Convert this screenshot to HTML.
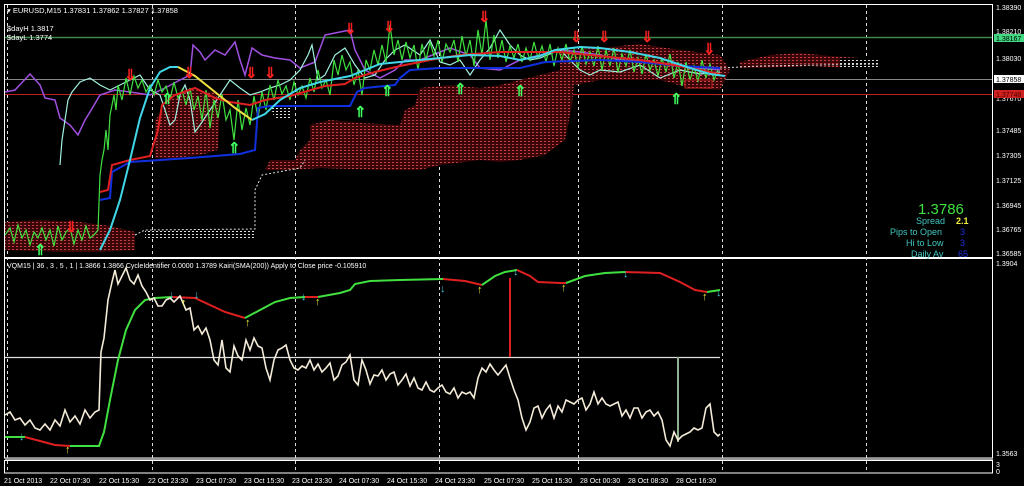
<!DOCTYPE html>
<html><head><meta charset="utf-8"><style>
html,body{margin:0;padding:0;background:#000;width:1024px;height:486px;overflow:hidden}
svg{display:block}
text{font-family:"Liberation Sans",sans-serif}
</style></head><body>
<svg width="1024" height="486" viewBox="0 0 1024 486" xmlns="http://www.w3.org/2000/svg">
<defs>
<pattern id="cl" width="4" height="3" patternUnits="userSpaceOnUse"><rect width="4" height="3" fill="#3a0608"/><rect x="0" y="0" width="2" height="1" fill="#c84048"/></pattern>
<pattern id="cw" width="4" height="3" patternUnits="userSpaceOnUse"><rect width="4" height="3" fill="#000"/><rect x="0" y="0" width="2" height="1" fill="#dddddd"/></pattern>
</defs>
<rect x="0" y="0" width="1024" height="486" fill="#000"/>
<rect x="4.5" y="4.5" width="988" height="253" fill="none" stroke="#fff"/>
<rect x="4.5" y="258.5" width="988" height="199.5" fill="none" stroke="#fff"/>
<rect x="4.5" y="460.5" width="988" height="12.5" fill="none" stroke="#fff"/>
<rect x="5" y="458" width="988" height="2" fill="#999"/>
<g stroke="#ddd" stroke-dasharray="3,3" stroke-width="1">
<line x1="7.5" y1="5" x2="7.5" y2="473"/><line x1="152.5" y1="5" x2="152.5" y2="473"/>
<line x1="295.5" y1="5" x2="295.5" y2="473"/><line x1="439.5" y1="5" x2="439.5" y2="473"/>
<line x1="578.5" y1="5" x2="578.5" y2="473"/><line x1="722.5" y1="5" x2="722.5" y2="473"/>
<line x1="866.5" y1="5" x2="866.5" y2="473"/>
</g>
<line x1="5" y1="37.5" x2="992" y2="37.5" stroke="#3c8a48" stroke-width="1.5"/>
<line x1="5" y1="79.5" x2="992" y2="79.5" stroke="#888"/>
<line x1="5" y1="94.5" x2="992" y2="94.5" stroke="#c02020"/>
<polygon fill="url(#cl)" points="5,222 40,220 80,222 110,226 135,232 135,250 100,252 60,252 5,250"/>
<polygon fill="url(#cl)" points="155,120 170,100 190,90 215,92 220,105 218,150 200,155 175,158 155,158"/>
<polygon fill="url(#cl)" points="265,170 270,160 295,160 300,150 310,140 310,125 330,120 360,123 400,125 405,110 415,105 420,88 450,85 480,88 500,85 520,80 560,70 575,72 572,105 565,140 545,155 520,160 500,162 480,160 440,165 420,170 380,170 320,168 290,170"/>
<polygon fill="url(#cl)" points="560,50 600,48 640,44 680,50 720,55 730,70 720,90 690,88 660,80 600,80 575,85 560,80"/>
<polygon fill="url(#cl)" points="740,62 770,55 800,53 830,56 860,58 880,60 880,68 850,68 810,66 760,68 740,68"/>
<polygon fill="url(#cw)" points="145,230 180,230 255,229 255,238 180,240 145,238"/>
<polygon fill="url(#cw)" points="270,105 290,105 290,120 275,120"/>
<polygon fill="url(#cw)" points="840,58 880,58 880,68 840,68"/>
<polyline fill="none" stroke="#ddd" stroke-dasharray="2,2" points="135,235 145,230 255,229 255,190 262,175 300,168 305,160"/>
<polyline fill="none" stroke="#ddd" stroke-dasharray="2,2" points="720,68 760,66 820,65 880,64"/>
<polyline fill="none" stroke="#a050e0" stroke-width="1.5" points="5,92 15,90 30,74 40,85 45,98 55,100 60,118 70,125 78,135 85,120 90,112 100,95 115,90 130,92 150,95 165,88 180,80 190,75 193,45 200,52 205,60 215,50 225,55 235,42 240,60 245,75 252,48 262,55 275,58 290,60 300,68 315,62 325,35 340,32 350,30 355,50 365,70 380,78 395,70 405,60 420,60 440,52 450,48 470,55 480,68 500,70 520,60 540,55 560,50 580,52 600,55 620,60 650,62 680,65 700,68 720,70"/>
<polyline fill="none" stroke="#a0f0e0" stroke-width="1.2" points="60,165 62,140 68,100 72,92 80,82 90,78 100,85 110,90 130,80 140,75 150,90 160,95 165,110 170,125 175,120 180,95 185,85 190,100 195,132 200,125 210,110 220,95 230,80 240,88 250,95 260,92 270,88 280,85 290,80 300,70 308,55 312,45 318,80 325,75 335,55 345,48 355,65 365,78 375,75 385,60 395,50 405,45 420,55 430,40 440,62 450,65 460,60 470,75 480,60 490,48 500,30 510,45 520,55 530,60 540,58 560,50 570,60 580,70 590,75 600,70 620,72 640,65 660,78 680,70 700,74 720,72"/>
<polyline fill="none" stroke="#40e040" stroke-width="1.2" points="5,235 10,228 14,242 18,225 22,238 26,230 30,245 34,232 38,238 42,228 46,240 50,230 54,246 58,226 62,240 66,232 70,228 74,244 78,230 82,240 86,226 90,238 94,235 98,230 100,175 102,160 104,150 106,130 108,150 110,115 112,105 114,95 116,110 118,85 122,100 126,78 130,95 134,76 138,88 142,80 146,92 150,85 154,95 158,80 162,92 166,86 170,100 174,82 178,98 182,90 186,105 190,88 194,110 198,96 202,120 206,90 210,128 214,100 218,118 222,94 226,120 230,110 234,140 238,100 242,130 246,108 250,125 254,96 258,118 262,92 266,110 270,85 274,100 278,80 282,94 286,86 290,100 294,82 298,95 302,86 306,98 310,78 314,92 318,70 322,88 326,80 330,95 334,60 338,75 342,55 346,70 350,62 354,85 358,70 362,95 366,60 370,70 374,50 378,65 382,45 386,62 390,25 394,55 398,40 402,60 406,42 410,58 414,45 418,70 422,44 426,60 430,42 434,56 438,40 442,62 446,44 450,52 454,40 458,62 462,36 466,56 470,40 474,66 478,30 482,55 486,20 490,60 494,35 498,58 502,40 506,62 510,46 514,58 518,44 522,62 526,48 530,60 534,42 538,58 542,46 546,62 550,44 554,66 558,48 562,60 566,44 570,62 574,50 578,68 582,46 586,64 590,52 594,66 598,46 602,70 606,50 610,66 614,48 618,72 622,54 626,66 630,50 634,72 638,58 642,74 646,54 650,70 654,60 658,76 662,58 666,72 670,54 674,78 678,62 682,86 686,62 690,80 694,66 698,82 702,60 706,78 710,64 714,80 718,70"/>
<polyline fill="none" stroke="#1030e0" stroke-width="2" points="100,200 110,198 112,172 130,162 190,158 240,154 255,150 258,108 270,106 350,106 357,92 365,88 395,85 400,78 410,70 440,68 520,68 545,62 600,60 640,62 680,66 720,68"/>
<polyline fill="none" stroke="#e02020" stroke-width="2" points="100,192 108,190 112,165 130,160 150,156 158,130 162,105 175,95 195,88 215,98 230,102 250,105 265,100 290,96 325,86 345,84 355,78 375,72 400,66 430,60 460,55 500,52 560,52 600,56 640,60 680,66 720,74"/>
<polyline fill="none" stroke="#40d8e8" stroke-width="2" points="100,250 110,230 120,200 130,160 140,118 150,88 160,72 170,67 178,67"/>
<polyline fill="none" stroke="#f0e040" stroke-width="2" points="178,67 195,76 215,92 235,108 252,120"/>
<polyline fill="none" stroke="#40d8e8" stroke-width="2" points="252,120 265,114 280,100 300,88 320,82 350,76 380,64 420,60 470,55 500,56 520,60 540,56 555,50 580,47 600,48 630,52 660,58 690,68 710,74 725,76"/>
<g fill="#ff2020" font-size="15" font-weight="bold">
<text x="124" y="80">⇓</text><text x="183" y="78">⇓</text><text x="245" y="78">⇓</text><text x="264" y="78">⇓</text><text x="344" y="34">⇓</text><text x="383" y="32">⇓</text><text x="478" y="22">⇓</text><text x="570" y="42">⇓</text><text x="598" y="42">⇓</text><text x="641" y="42">⇓</text><text x="703" y="54">⇓</text><text x="65" y="232">⇓</text>
</g>
<g fill="#40ff60" font-size="15" font-weight="bold">
<text x="161" y="104">⇑</text><text x="228" y="153">⇑</text><text x="354" y="117">⇑</text><text x="381" y="96">⇑</text><text x="454" y="94">⇑</text><text x="514" y="96">⇑</text><text x="670" y="104">⇑</text><text x="34" y="255">⇑</text>
</g>
<rect x="685" y="80" width="27" height="8" fill="none" stroke="#c02020"/>
<text x="7" y="13" fill="#fff" font-size="7.5">▾ EURUSD,M15  1.37831 1.37862 1.37827 1.37858</text>
<text x="7" y="31" fill="#fff" font-size="7.5">$dayH 1.3817</text>
<text x="7" y="40" fill="#fff" font-size="7.5">$dayL 1.3774</text>
<text x="918" y="214" fill="#40e040" font-size="15">1.3786</text>
<text x="916" y="224" fill="#40c8c0" font-size="9">Spread</text><text x="956" y="224" fill="#f0f040" font-size="9" font-weight="bold">2.1</text>
<text x="890" y="235" fill="#40c8c0" font-size="9">Pips to Open</text><text x="960" y="235" fill="#2030e0" font-size="9">3</text>
<text x="906" y="246" fill="#40c8c0" font-size="9">Hi to Low</text><text x="960" y="246" fill="#2030e0" font-size="9">3</text>
<text x="911" y="257" fill="#40c8c0" font-size="9">Daily Av</text><text x="958" y="257" fill="#2030e0" font-size="9">65</text>
<g fill="#fff" font-size="7">
<text x="996" y="10">1.38390</text><text x="996" y="34">1.38210</text><text x="996" y="61">1.38030</text>
<text x="996" y="101">1.37670</text><text x="996" y="133">1.37485</text><text x="996" y="158">1.37305</text>
<text x="996" y="183">1.37125</text><text x="996" y="208">1.36945</text><text x="996" y="232">1.36765</text>
<text x="996" y="256">1.36585</text><text x="996" y="266">1.3904</text><text x="996" y="456">1.3563</text>
<text x="996" y="467">3</text><text x="996" y="474">0</text>
</g>
<rect x="994" y="34" width="30" height="8" fill="#40d880"/><text x="996" y="41" fill="#000" font-size="7">1.38167</text>
<rect x="994" y="75" width="30" height="8" fill="#fff"/><text x="996" y="82" fill="#000" font-size="7">1.37858</text>
<rect x="994" y="90" width="30" height="8" fill="#d02020"/><text x="996" y="97" fill="#400" font-size="7">1.37748</text>
<text x="7" y="268" fill="#fff" font-size="7">VQM15 |  36 , 3 , 5 , 1  |  1.3866 1.3866  CycleIdentifier 0.0000 1.3789  Kairi(SMA(200)) Apply to Close price -0.105910</text>
<line x1="5" y1="357.5" x2="720" y2="357.5" stroke="#ddd" stroke-width="1.2"/>
<line x1="510" y1="278" x2="510" y2="357" stroke="#e02020" stroke-width="2"/>
<line x1="678" y1="357" x2="678" y2="442" stroke="#90b090" stroke-width="2"/>
<polyline fill="none" stroke="#40e040" stroke-width="2" points="5,437 25,437"/>
<polyline fill="none" stroke="#e02020" stroke-width="2" points="25,437 40,441 55,445 70,446"/>
<polyline fill="none" stroke="#40e040" stroke-width="2" points="70,446 99,446 104,432 110,400 118,360 126,330 135,310 145,300 155,298 172,297"/>
<polyline fill="none" stroke="#e02020" stroke-width="2" points="172,297 195,298 210,305 225,312 245,318"/>
<polyline fill="none" stroke="#40e040" stroke-width="2" points="245,318 260,310 275,302 290,298 305,297"/>
<polyline fill="none" stroke="#e02020" stroke-width="2" points="305,297 318,297"/>
<polyline fill="none" stroke="#40e040" stroke-width="2" points="318,297 340,293 350,290 355,284 370,281 400,280 443,279"/>
<polyline fill="none" stroke="#e02020" stroke-width="2" points="443,279 465,281 482,285"/>
<polyline fill="none" stroke="#40e040" stroke-width="2" points="482,285 495,276 505,272 517,270"/>
<polyline fill="none" stroke="#e02020" stroke-width="2" points="517,270 530,276 538,282 560,283 566,283"/>
<polyline fill="none" stroke="#40e040" stroke-width="2" points="566,283 585,276 605,273 625,272"/>
<polyline fill="none" stroke="#e02020" stroke-width="2" points="625,272 660,273 680,282 695,290 707,292"/>
<polyline fill="none" stroke="#40e040" stroke-width="2" points="707,292 720,290"/>
<polyline fill="none" stroke="#f4ecd8" stroke-width="1.6" points="5,415 10,412 15,420 20,418 25,425 30,420 35,428 40,430 45,424 50,430 55,420 60,426 65,410 70,422 75,416 80,424 85,410 90,418 95,412 99,410 100,380 101,352 104,338 108,300 112,282 115,270 118,284 122,276 126,268 130,280 134,284 138,275 142,286 146,292 150,300 154,298 158,306 162,306 166,300 170,298 174,302 180,296 186,310 190,308 194,330 198,326 202,334 206,328 210,340 214,360 218,365 222,340 226,368 230,372 234,346 238,356 242,360 246,340 250,350 254,338 258,346 262,348 266,368 270,380 274,360 278,350 282,348 286,345 290,360 294,368 298,370 302,366 306,368 310,360 314,370 318,364 322,372 326,368 330,363 334,380 338,376 342,365 346,362 350,355 354,380 358,385 362,360 366,370 370,384 374,375 378,376 382,370 386,380 390,374 394,372 398,385 402,380 406,374 410,386 414,378 418,388 422,390 426,382 430,390 434,392 438,388 442,385 446,392 450,394 454,388 458,398 462,392 466,394 470,392 474,398 478,378 482,368 486,372 490,364 494,370 498,375 502,370 506,365 510,378 514,390 518,400 522,418 526,430 530,422 534,408 538,406 542,418 546,410 550,405 554,418 558,406 562,412 566,400 570,402 574,404 578,400 582,398 586,410 590,404 594,392 598,404 602,398 606,404 610,406 614,404 618,402 622,416 626,410 630,418 634,408 638,408 642,418 646,412 650,410 654,416 658,412 662,420 666,440 670,446 674,432 678,440 682,436 686,434 690,432 694,428 698,430 702,428 706,408 710,404 714,432 718,436 720,434"/>
<g fill="#f0f040" font-size="11" font-weight="bold"><text x="65" y="453">↑</text><text x="181" y="306">↑</text><text x="245" y="326">↑</text><text x="315" y="305">↑</text><text x="477" y="293">↑</text><text x="561" y="291">↑</text><text x="702" y="300">↑</text></g>
<g fill="#40c8e0" font-size="11" font-weight="bold"><text x="19" y="440">↓</text><text x="169" y="298">↓</text><text x="194" y="298">↓</text><text x="301" y="300">↓</text><text x="440" y="292">↓</text><text x="513" y="275">↓</text><text x="623" y="277">↓</text><text x="716" y="296">↓</text></g>
<g fill="#fff" font-size="7">
<text x="4" y="483">21 Oct 2013</text><text x="50" y="483">22 Oct 07:30</text><text x="99" y="483">22 Oct 15:30</text><text x="148" y="483">22 Oct 23:30</text><text x="196" y="483">23 Oct 07:30</text><text x="244" y="483">23 Oct 15:30</text><text x="292" y="483">23 Oct 23:30</text><text x="339" y="483">24 Oct 07:30</text><text x="387" y="483">24 Oct 15:30</text><text x="435" y="483">24 Oct 23:30</text><text x="484" y="483">25 Oct 07:30</text><text x="532" y="483">25 Oct 15:30</text><text x="580" y="483">28 Oct 00:30</text><text x="628" y="483">28 Oct 08:30</text><text x="676" y="483">28 Oct 16:30</text>
</g>
</svg>
</body></html>
